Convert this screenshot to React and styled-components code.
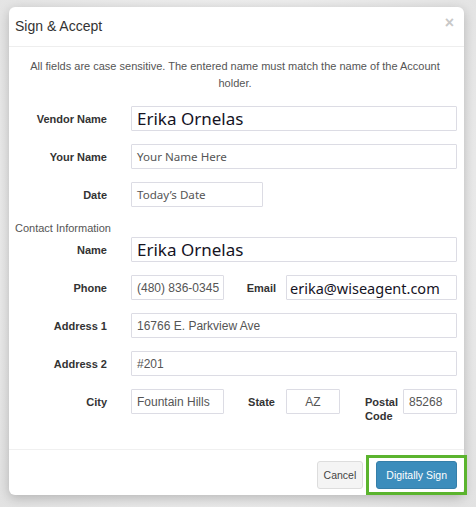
import React from "react";
import styled, { createGlobalStyle } from "styled-components";

const Global = createGlobalStyle`
  html, body { margin: 0; padding: 0; }
  body {
    width: 476px;
    height: 507px;
    overflow: hidden;
    background: radial-gradient(ellipse at 50% 45%, #f6f6f6 0%, #ececec 60%, #e2e2e2 100%);
    font-family: "Liberation Sans", Arial, sans-serif;
  }
`;

const Modal = styled.div`
  position: relative;
  margin: 7px 0 0 9px;
  width: 455px;
  height: 488px;
  box-sizing: border-box;
  background: #fff;
  border-radius: 6px;
  box-shadow: 0 3px 12px rgba(0, 0, 0, 0.22);
  display: flex;
  flex-direction: column;
`;

const Header = styled.div`
  height: 40px;
  box-sizing: border-box;
  border-bottom: 1px solid #eeeeee;
  display: flex;
  align-items: center;
  justify-content: space-between;
  padding: 0 10px 2px 6px;
`;

const Title = styled.h4`
  margin: 0;
  font-size: 14px;
  font-weight: normal;
  color: #333;
`;

const Close = styled.span`
  font-size: 16px;
  font-weight: bold;
  color: #c8c8c8;
  line-height: 1;
  margin-top: -6px;
`;

const Body = styled.div`
  flex: 1;
  padding: 11px 7px 0 0;
`;

const Intro = styled.p`
  margin: 0 0 14px;
  padding: 0 14px 0 18px;
  text-align: center;
  font-size: 11px;
  line-height: 17px;
  color: #555;
`;

const Row = styled.div`
  display: flex;
  align-items: flex-start;
  margin-bottom: 13px;
`;

const Label = styled.label`
  flex: 0 0 ${(p) => p.$w || 122}px;
  box-sizing: border-box;
  text-align: ${(p) => p.$align || "right"};
  padding: 6px ${(p) => p.$pr ?? 24}px 0 ${(p) => p.$pl ?? 0}px;
  font-size: 11px;
  font-weight: bold;
  line-height: 14px;
  color: #333;
`;

const Input = styled.div`
  box-sizing: border-box;
  height: 25px;
  ${(p) => (p.$w ? `flex: 0 0 ${p.$w}px;` : "flex: 1;")}
  border: 1px solid #dcdce4;
  border-radius: 1px;
  display: flex;
  align-items: center;
  justify-content: ${(p) => (p.$center ? "center" : "flex-start")};
  padding: 0 5px 0 ${(p) => p.$pl ?? 5}px;
  overflow: hidden;
  white-space: nowrap;
  color: ${(p) => (p.$big ? "#15131f" : "#555")};
  font-family: ${(p) =>
    p.$big || p.$soft ? `"Noto Sans", "Open Sans", sans-serif` : `"Liberation Sans", Arial, sans-serif`};
  font-size: ${(p) => (p.$big ? p.$bigSize || 17 : p.$fs || 12)}px;
`;

const Section = styled.div`
  font-size: 11px;
  line-height: 17px;
  color: #555;
  padding-left: 6px;
`;

const Footer = styled.div`
  height: 46px;
  box-sizing: border-box;
  border-top: 1px solid #f0f0f0;
  display: flex;
  align-items: flex-start;
  justify-content: flex-end;
  padding: 11px 7px 0 0;
`;

const Button = styled.button`
  height: 28px;
  box-sizing: border-box;
  border-radius: 3px;
  font-family: "Liberation Sans", Arial, sans-serif;
  font-size: 10.5px;
  padding: 0 ${(p) => (p.$primary ? 9 : 6)}px;
  border: 1px solid ${(p) => (p.$primary ? "#367fa9" : "#dddddd")};
  background: ${(p) => (p.$primary ? "#3c8dbc" : "#f4f4f4")};
  color: ${(p) => (p.$primary ? "#fff" : "#444")};
  cursor: pointer;
`;

const Highlight = styled.span`
  display: inline-flex;
  border: 3px solid #5bb42e;
  padding: 3px 7px;
  margin: -6px -10px 0 3px;
`;

export default function App() {
  return (
    <>
      <Global />
      <Modal>
        <Header>
          <Title>Sign &amp; Accept</Title>
          <Close>×</Close>
        </Header>
        <Body>
          <Intro>
            All fields are case sensitive. The entered name must match the name of the Account holder.
          </Intro>
          <Row>
            <Label>Vendor Name</Label>
            <Input $big>Erika Ornelas</Input>
          </Row>
          <Row>
            <Label>Your Name</Label>
            <Input $soft $fs={11.6}>Your Name Here</Input>
          </Row>
          <Row>
            <Label>Date</Label>
            <Input $soft $fs={11.6} $w={132}>Today’s Date</Input>
          </Row>
          <Section>Contact Information</Section>
          <Row>
            <Label>Name</Label>
            <Input $big>Erika Ornelas</Input>
          </Row>
          <Row>
            <Label>Phone</Label>
            <Input $w={93} $fs={12}>(480) 836-0345</Input>
            <Label $w={62} $pr={10}>Email</Label>
            <Input $big $bigSize={14.5} $pl={3}>erika@wiseagent.com</Input>
          </Row>
          <Row>
            <Label>Address 1</Label>
            <Input>16766 E. Parkview Ave</Input>
          </Row>
          <Row>
            <Label>Address 2</Label>
            <Input>#201</Input>
          </Row>
          <Row>
            <Label>City</Label>
            <Input $w={93}>Fountain Hills</Input>
            <Label $w={62} $pr={11}>State</Label>
            <Input $w={54} $center>AZ</Input>
            <Label $w={63} $align="left" $pl={25} $pr={0}>
              Postal Code
            </Label>
            <Input $w={54}>85268</Input>
          </Row>
        </Body>
        <Footer>
          <Button>Cancel</Button>
          <Highlight>
            <Button $primary>Digitally Sign</Button>
          </Highlight>
        </Footer>
      </Modal>
    </>
  );
}
